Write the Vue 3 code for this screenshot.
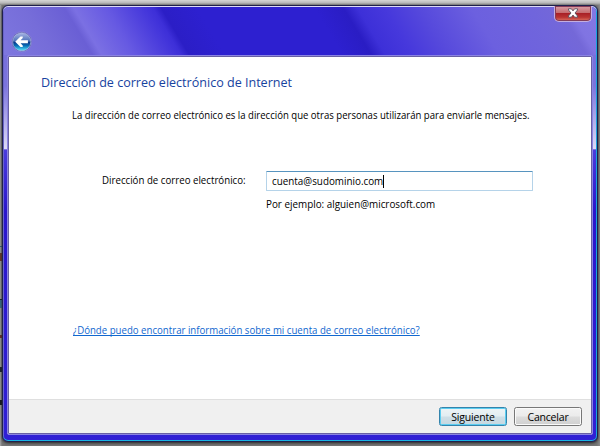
<script setup>
import { ref } from 'vue'
const email = ref('cuenta@sudominio.com')
</script>

<template>
  <div class="desktop">
    <main class="window">
      <header class="titlebar">
        <svg class="back" viewBox="0 0 22 22" aria-label="Atrás">
          <defs>
            <linearGradient id="orb" x1="0" y1="0" x2="0" y2="1">
              <stop offset="0" stop-color="#a9b6e4" />
              <stop offset=".48" stop-color="#4c70b8" />
              <stop offset=".5" stop-color="#0a2f84" />
              <stop offset=".72" stop-color="#0870b8" />
              <stop offset="1" stop-color="#5ceaff" />
            </linearGradient>
          </defs>
          <circle cx="11" cy="11" r="10.3" fill="#3a3a90" stroke="#8e88dc" stroke-width=".8" />
          <circle cx="11" cy="11" r="9.3" fill="url(#orb)" stroke="#c3cdf0" stroke-width=".6" />
          <path d="M4.3 11 L9.7 5.6 L12 5.6 L12 7.2 L9.8 9.5 H17.3 V12.5 H9.8 L12 14.8 L12 16.4 H9.7 Z" fill="#fff" />
        </svg>
        <button class="close" aria-label="Cerrar">
          <svg viewBox="0 0 12 10">
            <path d="M1.5 .8 H4.4 L6 2.9 L7.6 .8 H10.5 V2 L8 5 L10.5 8 V9.2 H7.6 L6 7.1 L4.4 9.2 H1.5 V8 L4 5 L1.5 2 Z" fill="#fff" stroke="#59505e" stroke-width=".9" />
          </svg>
        </button>
      </header>
      <section class="client">
        <div class="page">
          <h1>Dirección de correo electrónico de Internet</h1>
          <p class="intro">La dirección de correo electrónico es la dirección que otras personas utilizarán para enviarle mensajes.</p>
          <div class="field">
            <label>Dirección de correo electrónico:</label>
            <div class="input"><span class="value">{{ email }}</span><i class="caret"></i></div>
          </div>
          <p class="example">Por ejemplo: alguien@microsoft.com</p>
          <a class="help">¿Dónde puedo encontrar información sobre mi cuenta de correo electrónico?</a>
        </div>
        <footer>
          <button class="btn primary">Siguiente</button>
          <button class="btn">Cancelar</button>
        </footer>
      </section>
    </main>
  </div>
</template>

<style>
body { margin: 0; }
</style>

<style scoped>
* { box-sizing: border-box; }
.desktop {
  width: 600px;
  height: 446px;
  padding: 5px 2px 4px;
  overflow: hidden;
  background:
    linear-gradient(180deg, #d6d6d6 0, #b8b8b8 3px, #858585 5px, transparent 5px),
    linear-gradient(180deg, transparent 246px, #345f7c 246px 247px, transparent 247px 253px, #6b3b2a 253px 261px, transparent 261px 299px, #14222c 299px 300px, #3c6c88 300px 308px, transparent 308px 335px, #693028 335px 338px, transparent 338px 367px, #1d2530 367px 372px, transparent 372px 400px, #17191f 400px 405px, transparent 405px) 0 0 / 2px 100% no-repeat,
    linear-gradient(90deg, #a8a8a8, #777 2px, #777 597px, #8a8a8a);
  font-family: "Open Sans", "Noto Sans", sans-serif;
  font-size: 10.5px;
  color: #000;
}
.window {
  width: 596px;
  height: 437px;
  display: flex;
  flex-direction: column;
  padding: 0 5px 6px 4px;
  border: 1px solid #20204c;
  border-radius: 6px;
  box-shadow: inset 0 1px #dcd9f8, inset -1px 0 #18a4dc, inset 0 -1px #18b4e4, inset 1px 0 #6a65c8, 0 1px 3px #222;
  background:
    linear-gradient(180deg, transparent 143px, #4a3cdc 144px, #2a16cc 205px, #3020d4 100%),
    linear-gradient(180deg, transparent 51px, rgba(255,255,255,.03) 80px, rgba(255,255,255,.75) 143px, transparent 144px),
    #7770dc;
}
.titlebar {
  flex: none;
  height: 48px;
  margin: 1px -4px 0 -3px;
  display: flex;
  justify-content: space-between;
  align-items: flex-start;
  padding: 0 4px 0 6px;
  border-radius: 5px 5px 0 0;
  background: linear-gradient(59deg, #7e77df 0, #766dd9 42px, #6a5fd5 76px, #7b70e3 84px, #6659e2 112px, #4436db 145px, #3d2fd8 152px, #2b1ec6 159px, #2d20d0 190px, #2d20d0 290px, #2a1dc4 315px, #3d30d8 327px, #4638dc 350px, #5649dc 380px, #6c60df 425px, #7065dc 475px, #7468d8 500px, #8074e2 508px, #8378e4 534px);
}
.back { width: 21.5px; height: 21.5px; margin-top: 24px; margin-left: .5px; }
.close {
  display: flex;
  justify-content: center;
  width: 38px;
  height: 16px;
  padding: 2px 0 0;
  margin-top: -1px;
  border: 1px solid #c4aee0;
  border-top: 0;
  border-radius: 0 0 5px 5px;
  box-shadow: inset 0 0 0 1px #843b58;
  background: linear-gradient(180deg, #d9a0a8 0, #c56d70 45%, #a92027 50%, #b93432 75%, #de7464 100%);
}
.close svg { width: 12px; height: 10px; }
.client {
  flex: 1;
  display: flex;
  flex-direction: column;
  margin: 0 -1px 0 0;
  border: 1px solid #8b83e2;
  border-radius: 2px;
  box-shadow: inset 0 0 0 1px #6860a4;
  padding: 1px;
  background: #fff;
}
.page { flex: 1; padding: 17px 0 0 32px; }
h1, p, label, .value, .help { white-space: nowrap; transform-origin: 0 50%; }
h1 { margin: 0; height: 17px; font-size: 13.3px; line-height: 17px; font-weight: 400; color: #1743a0; transform: scaleX(.944); }
p { margin: 0; line-height: 14px; }
.intro { margin: 17px 0 0 31px; transform: scaleX(.911); }
.field { display: flex; margin: 49px 0 0 61px; height: 20px; align-items: flex-start; }
label { width: 164px; line-height: 18px; transform: scaleX(.923); }
.input {
  display: flex;
  align-items: center;
  width: 267px;
  height: 20px;
  padding: 0 5px;
  border: 1px solid #b5d3e9;
  border-top-color: #5794bf;
  border-radius: 1px;
}
.value { width: 111px; transform: scaleX(.938); }
.caret { width: 1px; height: 13px; background: #000; }
.example { margin: 6px 0 0 225px; transform: scaleX(.939); }
.help { display: inline-block; margin: 112px 0 0 32px; line-height: 14px; color: #1268cf; text-decoration: underline; text-decoration-skip-ink: none; transform: scaleX(.918); }
footer {
  flex: none;
  display: flex;
  justify-content: flex-end;
  gap: 7px;
  height: 34px;
  padding: 7px 9px 0 0;
  border-top: 1px solid #dfdfdf;
  background: #f0f0f0;
}
.btn {
  width: 68px;
  height: 19px;
  padding: 0;
  border: 1px solid #777;
  border-radius: 2.5px;
  box-shadow: inset 0 0 0 1px #fafafa;
  background: linear-gradient(180deg, #f2f2f2 0, #ebebeb 48%, #dcdcdc 52%, #d0d0d0 100%);
  font: inherit;
  line-height: 16px;
  letter-spacing: -.2px;
  color: #000;
}
.btn.primary {
  border-color: #3484ac;
  box-shadow: inset 0 0 0 1px #5ccdf0;
  background: linear-gradient(180deg, #eef4f6 0, #e2edf2 48%, #cfdfe7 52%, #c5d7e0 100%);
}
</style>
